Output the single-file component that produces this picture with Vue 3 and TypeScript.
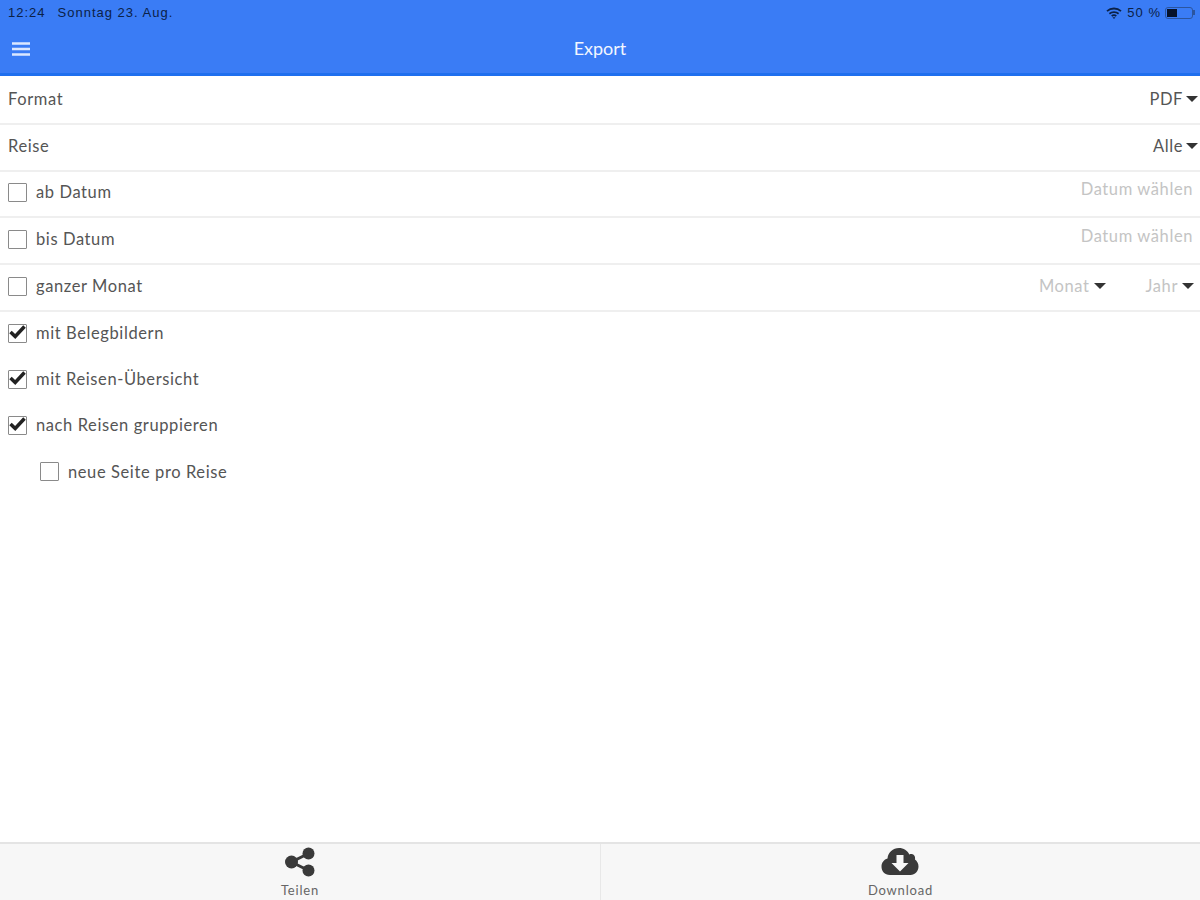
<script setup lang="ts">
interface Opt { label: string; checked: boolean; sub?: boolean }
const dateRows: string[] = ['ab Datum', 'bis Datum']
const opts: Opt[] = [
  { label: 'mit Belegbildern', checked: true },
  { label: 'mit Reisen-Übersicht', checked: true },
  { label: 'nach Reisen gruppieren', checked: true },
  { label: 'neue Seite pro Reise', checked: false, sub: true },
]
</script>

<template>
  <div class="page">
    <header class="head">
      <div class="status">
        <span class="time">12:24</span>
        <span class="date">Sonntag 23. Aug.</span>
        <span class="spacer"></span>
        <svg class="wifi" width="16" height="12" viewBox="0 0 16 12" fill="none" stroke="#0b2147" stroke-width="1.800"><path d="M1 4.200C5 .6 11 .6 15 4.200"/><path d="M3.400 6.700C6 4.500 10 4.500 12.600 6.700"/><path d="M5.700 9C7 8 9 8 10.300 9"/><path d="M8 12 6.500 10.300H9.500Z" fill="#0b2147" stroke="none"/></svg>
        <span class="pct">50 %</span>
        <span class="battery"><i class="level"></i></span>
        <span class="nub"></span>
      </div>
      <div class="bar">
        <svg class="burger" width="20" height="16" viewBox="0 0 20 16"><path d="M1 2.500h18M1 8h18M1 13.500h18" stroke="#dbe7ff" stroke-width="2.600" fill="none"/></svg>
        <span class="title">Export</span>
      </div>
    </header>

    <main class="content">
      <div class="row line"><span>Format</span><span class="val">PDF<i class="caret"></i></span></div>
      <div class="row line"><span>Reise</span><span class="val">Alle<i class="caret"></i></span></div>
      <div v-for="r in dateRows" :key="r" class="row line">
        <span class="check"><i class="box"></i>{{ r }}</span>
        <span class="muted raised">Datum wählen</span>
      </div>
      <div class="row line">
        <span class="check"><i class="box"></i>ganzer Monat</span>
        <span class="muted pick">
          <span class="m">Monat<i class="caret"></i></span>
          <span class="j">Jahr<i class="caret"></i></span>
        </span>
      </div>
      <div v-for="o in opts" :key="o.label" class="row plain" :class="{ sub: o.sub }">
        <span class="check">
          <i class="box">
            <svg v-if="o.checked" class="tick" width="19" height="17" viewBox="0 0 19 17"><path d="M2.500 8 7.200 12.500 16.500 2.500" fill="none" stroke="#222" stroke-width="3.500"/></svg>
          </i>{{ o.label }}
        </span>
      </div>
    </main>

    <footer class="foot">
      <div class="tab">
        <svg width="32" height="30" viewBox="0 0 32 30"><g fill="#3a3a3a"><circle cx="24.500" cy="6.500" r="6"/><circle cx="24.500" cy="23.500" r="6"/><circle cx="7.500" cy="15" r="6.500"/></g><path d="M24.500 6.500 7.500 15 24.500 23.500" fill="none" stroke="#3a3a3a" stroke-width="3"/></svg>
        <span>Teilen</span>
      </div>
      <div class="tab">
        <svg class="cloud" width="40" height="30" viewBox="0 0 38 30"><path d="M9 28C3.500 28 .5 24 .5 19.500.5 15.500 3 12.500 6.500 11.500 7 5.500 12 1 18 1c4.500 0 8.500 2.500 10.300 6.500 1-.5 1.700-.6 2.700-.5 2.500.4 3.500 3 3 5.500 2 1.500 3.500 4 3.500 7 0 4.500-3.500 8.500-8 8.500Z" fill="#3a3a3a"/><path d="M15.500 8h7v8h5L19 24.500 10.500 16h5Z" fill="#f7f7f7"/></svg>
        <span>Download</span>
      </div>
    </footer>
  </div>
</template>

<style>
html, body { margin: 0; background: #fff; }
</style>

<style scoped>
.page {
  width: 1200px;
  height: 900px;
  display: flex;
  flex-direction: column;
  overflow: hidden;
  font-family: "Lato", "Noto Sans", sans-serif;
  font-size: 16.500px;
  letter-spacing: 0.600px;
  color: #555;
}
.head {
  height: 76px;
  box-sizing: border-box;
  background: #3a7cf5;
  border-bottom: 3px solid #1f6fee;
  flex: none;
}
.status {
  height: 25px;
  display: flex;
  align-items: center;
  padding: 0 5px 0 8px;
  font-family: "Liberation Sans", sans-serif;
  font-size: 13px;
  letter-spacing: 1px;
  color: #0b2147;
}
.date { margin-left: 12px; }
.spacer { flex: 1; }
.wifi { margin-right: 5px; }
.pct { margin-right: 4px; }
.battery {
  width: 28px;
  height: 12px;
  box-sizing: border-box;
  border: 1px solid #2b559f;
  border-radius: 3px;
  padding: 1px;
  display: block;
}
.level { display: block; width: 10px; height: 8px; background: #06122a; }
.nub { width: 2px; height: 5px; background: #2b559f; margin-left: 0; }
.bar {
  height: 48px;
  display: flex;
  align-items: center;
  justify-content: center;
  position: relative;
  color: #f2f6ff;
  font-size: 18px;
  letter-spacing: normal;
}
.burger { position: absolute; left: 11px; top: 16px; }
.title { margin-top: -3px; }
.content { flex: 1; padding-top: 2px; }
.row {
  height: 46.800px;
  box-sizing: border-box;
  display: flex;
  align-items: center;
  justify-content: space-between;
  padding: 0 2px 2px 8px;
}
.plain { height: 46.200px; padding-bottom: 4px; }
.line { border-bottom: 2px solid #efefef; }
.line .check { margin-top: -1px; }
.val { display: flex; align-items: center; }
.caret {
  display: inline-block;
  width: 0;
  height: 0;
  margin-left: 3px;
  border-left: 6px solid transparent;
  border-right: 6px solid transparent;
  border-top: 6px solid #333;
}
.check { display: flex; align-items: center; }
.box {
  display: flex;
  width: 19px;
  height: 19px;
  box-sizing: border-box;
  border: 1.500px solid #8a8a8a;
  border-radius: 1px;
  margin-right: 9px;
  flex: none;
  align-items: center;
  justify-content: center;
  background: #fff;
}
.tick { flex: none; margin-top: -2px; }
.sub { padding-left: 40px; }
.muted { color: #c4c4c4; }
.raised { margin-right: 5px; margin-top: -7px; }
.pick { display: flex; align-items: center; margin-right: 4px; margin-top: -1px; }
.m, .j { display: flex; align-items: center; }
.m .caret, .j .caret { margin-left: 4px; }
.j { margin-left: 40px; }
.foot {
  height: 58px;
  flex: none;
  box-sizing: border-box;
  border-top: 2px solid #e4e4e4;
  background: #f7f7f7;
  display: grid;
  grid-template-columns: 1fr 1fr;
}
.tab {
  display: flex;
  flex-direction: column;
  align-items: center;
  padding-top: 3px;
  font-size: 13px;
  line-height: 16px;
  letter-spacing: 0.800px;
  color: #666;
}
.tab + .tab { border-left: 1px solid #e8e8e8; }
.tab svg { display: block; margin-bottom: 5px; }
.cloud { margin-left: -2px; }
</style>
